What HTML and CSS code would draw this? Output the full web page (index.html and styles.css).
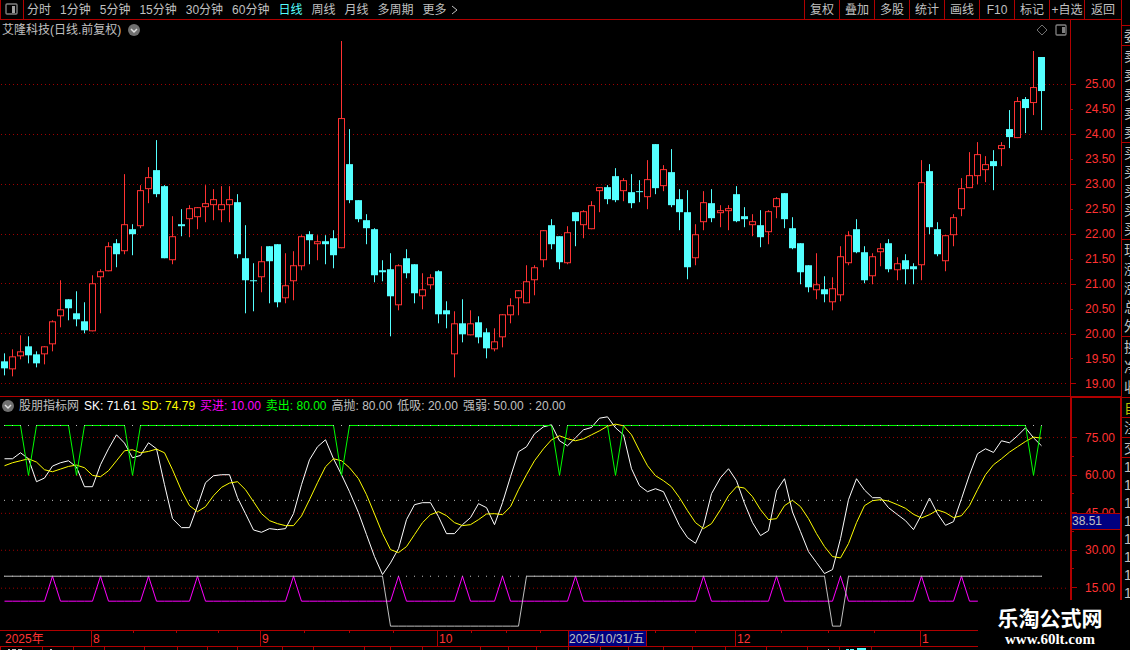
FILE: index.html
```html
<!DOCTYPE html>
<html lang="zh-CN">
<head>
    <meta charset="UTF-8">
    <meta name="viewport" content="width=device-width, initial-scale=1.0">
    <title>艾隆科技 日线</title>
    <link rel="stylesheet" href="styles.css">
</head>
<body>
    <div class="app">
        <main class="workspace">
            <header class="topbar">
                <button class="toggle" aria-label="侧栏">
                    <svg width="14" height="13" viewBox="0 0 14 13">
                        <rect x="1" y="1" width="11" height="10" rx="1" fill="none" stroke="#808080" stroke-width="1.4"/>
                        <rect x="7" y="3" width="3" height="7" fill="#a0a0a0"/>
                    </svg>
                </button>
                <nav class="periods">
                    <button>分时</button>
                    <button>1分钟</button>
                    <button>5分钟</button>
                    <button>15分钟</button>
                    <button>30分钟</button>
                    <button>60分钟</button>
                    <button class="active">日线</button>
                    <button>周线</button>
                    <button>月线</button>
                    <button>多周期</button>
                    <button class="more">更多
                        <svg width="7" height="10" viewBox="0 0 7 10"><path d="M1 1l5 4-5 4" fill="none" stroke="#c0c0c0"/></svg>
                    </button>
                </nav>
                <div class="tools">
                    <button>复权</button>
                    <button>叠加</button>
                    <button>多股</button>
                    <button>统计</button>
                    <button>画线</button>
                    <button>F10</button>
                    <button>标记</button>
                    <button>+自选</button>
                    <button>返回</button>
                </div>
            </header>

            <section class="pane price">
                <div class="plot">
                    <div class="caption title">
                        <span>艾隆科技(日线.前复权)</span>
                        <svg width="12" height="12" viewBox="0 0 12 12"><circle cx="6" cy="6" r="6" fill="#707070"/><path d="M3 5l3 3 3-3" fill="none" stroke="#e0e0e0" stroke-width="1.5"/></svg>
                        <span class="corner">
                            <svg width="12" height="12" viewBox="0 0 12 12"><path d="M6 1l5 5-5 5-5-5z" fill="none" stroke="#707070"/></svg>
                            <svg width="12" height="12" viewBox="0 0 12 12"><rect x="1" y="1" width="10" height="10" rx="1" fill="none" stroke="#808080" stroke-width="1.3"/><rect x="7" y="3" width="3" height="6" fill="#808080"/></svg>
                        </span>
                    </div>
                    <svg class="chart" id="priceChart" viewBox="0 38 1070 358" preserveAspectRatio="none"></svg>
                </div>
                <ul class="scale">
                    <li>25.00</li>
                    <li>24.50</li>
                    <li>24.00</li>
                    <li>23.50</li>
                    <li>23.00</li>
                    <li>22.50</li>
                    <li>22.00</li>
                    <li>21.50</li>
                    <li>21.00</li>
                    <li>20.50</li>
                    <li>20.00</li>
                    <li>19.50</li>
                    <li>19.00</li>
                </ul>
            </section>

            <section class="pane indicator">
                <div class="plot">
                    <div class="caption legend">
                        <svg width="12" height="12" viewBox="0 0 12 12"><circle cx="6" cy="6" r="6" fill="#707070"/><path d="M3 5l3 3 3-3" fill="none" stroke="#e0e0e0" stroke-width="1.5"/></svg>
                        <span>股朋指标网</span>
                        <span class="sk">SK: 71.61</span>
                        <span class="sd">SD: 74.79</span>
                        <span class="buy">买进: 10.00</span>
                        <span class="sell">卖出: 80.00</span>
                        <span>高抛: 80.00</span>
                        <span>低吸: 20.00</span>
                        <span>强弱: 50.00</span>
                        <span>: 20.00</span>
                    </div>
                    <svg class="chart" id="indicatorChart" viewBox="0 415 1070 215" preserveAspectRatio="none"></svg>
                </div>
                <ul class="scale">
                    <li>75.00</li>
                    <li></li>
                    <li>60.00</li>
                    <li></li>
                    <li>45.00</li>
                    <li></li>
                    <li>30.00</li>
                    <li></li>
                    <li>15.00</li>
                </ul>
                <span class="cursor-value">38.51</span>
            </section>

            <div class="timeline">
                <span>2025年</span>
                <span>8</span>
                <span>9</span>
                <span>10</span>
                <span class="cursor-date">2025/10/31/五</span>
                <span></span>
                <span>12</span>
                <span>1</span>
                <svg class="ticks" id="ticks" viewBox="0 0 1121 2" preserveAspectRatio="none"></svg>
            </div>
            <svg class="tabs" id="tabs" viewBox="0 0 1121 3" preserveAspectRatio="none"></svg>
        </main>

        <aside class="quote">
            <div class="block head"></div>
            <div class="block one"><span>委</span></div>
            <div class="block five"><span>卖</span><span>卖</span><span>卖</span><span>卖</span><span>卖</span></div>
            <div class="block five"><span>买</span><span>买</span><span>买</span><span>买</span><span>买</span></div>
            <div class="block five"><span>现</span><span>涨</span><span>涨</span><span>总</span><span>外</span></div>
            <div class="block three"><span>换</span><span>净</span><span>收</span></div>
            <div class="block one own"><span>自</span></div>
            <div class="block one"><span>注</span></div>
            <div class="block one"><span>交</span></div>
            <div class="deals"><span>1</span><span>1</span><span>1</span><span>1</span><span>1</span><span>1</span><span>1</span><span>1</span></div>
        </aside>

        <div class="brand">
            <strong>乐淘公式网</strong>
            <a href="#">www.60lt.com</a>
        </div>
    </div>
    <script src="script.js"></script>
</body>
</html>
```
FILE: styles.css
```css
* {
    box-sizing: border-box;
}

body {
    margin: 0;
    background: #000;
    color: #c0c0c0;
    font-family: "Liberation Sans", "Noto Sans CJK SC", sans-serif;
    font-size: 12px;
    line-height: 16px;
}

button {
    padding: 0;
    border: 0;
    background: none;
    color: inherit;
    font: inherit;
    white-space: nowrap;
    cursor: pointer;
}

ul {
    margin: 0;
    padding: 0;
    list-style: none;
}

svg {
    display: block;
    flex-shrink: 0;
}

.app {
    position: relative;
    display: flex;
    height: 100vh;
    overflow: hidden;
}

.workspace {
    display: flex;
    flex-direction: column;
    flex: 1;
    min-width: 0;
}

/* top bar */
.topbar {
    display: flex;
    height: 20px;
    border-bottom: 1px solid #b00000;
}

.toggle {
    display: flex;
    align-items: center;
    justify-content: center;
    width: 24px;
    border-left: 1px solid #b00000;
    border-right: 1px solid #b00000;
}

.periods {
    display: flex;
    gap: 9px;
    padding-left: 3px;
}

.periods .active {
    color: #54ffff;
}

.more {
    display: flex;
    align-items: center;
    gap: 4px;
}

.tools {
    display: flex;
    margin-left: auto;
}

.tools button {
    width: 35px;
    border-left: 1px solid #b00000;
}

.tools button:last-child {
    width: 37px;
}

/* chart panes */
.pane {
    position: relative;
    display: flex;
    min-height: 0;
}

.price {
    flex: 377 0 0;
    border-bottom: 1px solid #b00000;
}

.indicator {
    flex: 233 0 0;
}

.plot {
    display: flex;
    flex-direction: column;
    flex: 1;
    min-width: 0;
}

.caption {
    display: flex;
    align-items: center;
    gap: 5px;
    height: 18px;
    padding: 0 3px 0 2px;
    white-space: nowrap;
}

.title {
    gap: 7px;
    padding-top: 1px;
}

.legend {
    padding-bottom: 1px;
}

.corner {
    display: flex;
    gap: 7px;
    margin-left: auto;
}

.legend .sk {
    color: #fff;
}

.legend .sd {
    color: #ff0;
}

.legend .buy {
    color: #f0f;
}

.legend .sell {
    color: #0f0;
}

.chart {
    flex: 1;
    width: 100%;
    min-height: 0;
}

.scale {
    display: flex;
    flex-direction: column;
    width: 51px;
    padding-top: 52px;
    border-left: 1px solid #b00000;
    color: #ff3232;
}

.scale li {
    display: flex;
    align-items: center;
    flex: 1;
    min-height: 0;
}

.scale li::before {
    content: "";
    width: 5px;
    height: 1px;
    margin-right: 9px;
    background: #b00000;
}

.scale li:nth-child(even)::before {
    width: 2px;
    margin-right: 12px;
}

.indicator .scale {
    padding: 30px 0 33px;
    border: solid #b00000;
    border-width: 1px 1px 0 2px;
}

.indicator .scale li::before {
    margin-right: 8px;
}

.cursor-value {
    position: absolute;
    right: 1px;
    bottom: 100px;
    width: 48px;
    border: solid #b00000;
    border-width: 1px 0;
    background: #000080;
    line-height: 15px;
}

/* dates */
.timeline {
    position: relative;
    display: grid;
    grid-template-columns: 91fr 169fr 177fr 131fr 79fr 88fr 185fr 201fr;
    height: 17px;
    border-top: 1px solid #b00000;
    border-bottom: 1px solid #b00000;
    color: #ff3232;
    line-height: 16px;
}

.timeline span {
    height: 15px;
    padding-left: 1px;
    border-left: 1px solid #b00000;
    white-space: nowrap;
}

.timeline span:first-child {
    padding-left: 4px;
    border-color: transparent;
}

.timeline span:nth-child(6) {
    border-color: transparent;
}

.timeline .cursor-date {
    padding-left: 0;
    border-right: 1px solid #b00000;
    background: #000080;
    color: #c0c0c0;
}

.ticks {
    position: absolute;
    top: 0;
    left: 0;
    width: 100%;
    height: 2px;
}

.tabs {
    width: 100%;
    height: 3px;
}

/* quote column, only its edge is open */
.quote {
    width: 9px;
    border-left: 1px solid #b00000;
    overflow: hidden;
    font-size: 14px;
}

.quote span {
    display: flex;
    align-items: center;
    flex: 1;
    min-height: 0;
    padding-left: 2px;
}

.block {
    display: flex;
    flex-direction: column;
    border-bottom: 1px solid #b00000;
}

.head {
    height: 26px;
}

.one {
    height: 20px;
}

.five {
    height: 97px;
}

.three {
    height: 61px;
}

.own {
    color: #c0c000;
}

.deals span {
    height: 18px;
}

.brand {
    position: absolute;
    right: 0;
    bottom: 0;
    display: flex;
    flex-direction: column;
    align-items: center;
    width: 152px;
    height: 50px;
    padding: 8px 8px 0 0;
    background: #000;
    color: #fff;
}

.brand strong {
    font-size: 21px;
    line-height: 22px;
}

.brand a {
    color: #fff;
    font-family: "Liberation Serif", serif;
    font-size: 15px;
    font-weight: bold;
    line-height: 18px;
    text-decoration: none;
}
```
FILE: script.js
```js
const RED = '#ff3232';
const CYAN = '#54ffff';

// high, body top, body bottom, low, 1 = rising day
const candles = [
    [353,361,368,375,0],[349,356,369,376,1],[335,351,356,359,1],[336,346,355,363,0],[351,354,363,367,0],
    [346,346,354,364,1],[320,321,344,351,1],[280,309,316,327,1],[299,299,308,320,0],[291,313,319,326,0],
    [302,321,330,333,0],[275,283,331,331,1],[269,271,277,313,1],[242,246,271,271,1],[239,243,254,267,0],
    [174,224,251,254,1],[224,229,234,255,0],[185,190,226,228,1],[167,177,189,203,1],[140,170,194,197,0],
    [185,186,258,258,0],[216,236,260,264,1],[209,224,226,236,0],[205,208,219,237,1],[207,207,217,229,1],
    [185,203,207,222,1],[189,199,205,220,1],[186,204,210,222,1],[186,199,205,222,1],[194,202,254,258,0],
    [225,258,280,313,0],[263,280,281,311,0],[246,261,277,292,1],[246,246,261,303,0],[244,244,302,307,0],
    [253,285,298,303,1],[251,265,281,300,1],[235,236,266,270,1],[231,234,240,264,0],[235,241,244,260,1],
    [235,241,244,264,0],[230,238,255,268,0],[41,118,248,248,1],[129,164,200,203,0],[200,200,219,222,0],
    [214,220,228,244,0],[228,229,275,282,0],[260,270,272,281,0],[253,269,296,336,0],[264,265,305,310,1],
    [249,258,273,278,0],[264,264,293,303,0],[273,289,296,309,1],[274,277,285,289,1],[270,271,314,323,0],
    [301,310,314,328,0],[311,323,354,377,1],[299,323,334,342,0],[310,323,335,335,1],[316,322,337,343,0],
    [328,332,348,358,0],[328,341,349,351,1],[314,314,337,347,1],[298,305,315,323,1],[290,290,298,315,1],
    [265,281,303,303,1],[265,267,280,295,1],[230,230,260,267,1],[219,225,244,249,0],[236,236,262,269,0],
    [226,232,263,264,1],[212,212,221,246,0],[210,211,225,238,1],[201,205,229,229,1],[187,187,191,212,1],
    [185,187,199,204,0],[168,176,200,202,0],[178,180,191,201,1],[174,192,203,208,0],[180,191,192,202,0],
    [160,179,197,209,1],[144,144,188,194,0],[165,169,186,191,1],[149,172,205,207,0],[189,199,212,230,0],
    [190,212,267,279,0],[224,234,258,265,1],[191,202,222,230,1],[189,203,218,222,0],[205,210,213,227,1],
    [205,208,211,230,1],[186,194,221,222,0],[207,216,219,227,0],[214,221,225,236,1],[210,225,237,247,0],
    [210,211,232,244,1],[197,198,207,218,1],[193,193,219,228,0],[217,228,248,249,0],[243,243,272,284,0],
    [265,265,287,292,0],[253,284,290,299,1],[276,289,294,302,0],[277,288,302,310,1],[246,256,295,301,1],
    [231,235,263,265,1],[219,229,252,253,0],[246,252,280,283,0],[253,256,276,284,1],[243,248,252,266,1],
    [239,243,269,272,0],[257,263,270,280,1],[254,260,269,284,0],[263,266,269,284,0],[160,182,265,280,1],
    [164,171,227,234,0],[222,229,254,256,0],[235,235,261,271,1],[214,217,235,246,1],[178,188,209,216,1],
    [152,175,188,188,1],[142,154,176,184,1],[156,164,170,182,1],[150,161,166,190,0],[142,145,149,166,1],
    [110,129,137,148,0],[97,101,138,138,1],[97,99,108,133,0],[51,87,103,115,1],[57,57,91,130,0]
];

// SK and SD, in thirds of a unit below y = 395
const sk = [
    190,190,172,190,259,248,212,202,196,215,274,274,208,160,118,143,187,180,142,160,268,370,397,397,332,262,
    241,238,238,307,355,404,411,400,403,400,355,268,193,154,133,190,238,289,352,418,484,538,503,460,373,328,
    322,322,364,415,415,388,367,325,337,388,322,244,169,154,115,94,88,136,151,127,103,96,68,64,97,118,220,271,
    289,280,289,340,391,427,444,391,295,247,220,256,324,382,421,406,286,250,350,409,469,502,535,523,430,313,
    250,284,307,307,337,358,376,403,358,308,355,390,379,310,238,175,160,171,136,142,121,97,127,151
];
const sd = [
    211,202,196,190,200,223,229,221,213,209,217,240,244,226,196,166,163,172,168,161,172,223,286,331,349,334,
    301,276,263,259,283,319,355,376,385,391,391,362,313,262,214,190,196,217,250,298,356,415,463,472,454,418,
    382,358,349,361,382,391,388,373,356,355,358,334,283,238,196,160,133,121,130,136,130,118,106,92,86,91,118,
    166,211,241,256,274,307,346,382,400,385,343,301,274,278,304,343,373,370,331,315,334,370,415,454,484,488,
    445,382,331,316,313,317,328,339,357,368,358,344,352,367,361,331,283,238,208,190,170,154,138,125,128
];

const sellDays = [3, 9, 16, 42, 69, 76, 128];
const buyDays = [6, 12, 18, 24, 36, 49, 57, 62, 71, 87, 96, 104, 114, 119];

function xOf(i) {
    return 4 + 8 * i + Math.floor((i + 0.5) / 22.25);
}

function rect(x, y, w, h, fill) {
    return `<rect x="${x}" y="${y}" width="${w}" height="${h}" fill="${fill}"/>`;
}

function dots(y) {
    return `<line x1="1" y1="${y + 0.5}" x2="1067" y2="${y + 0.5}" stroke="#a00000" stroke-dasharray="1 3" shape-rendering="crispEdges"/>`;
}

function line(values, color) {
    const points = values.map((y, i) => `${xOf(i) + 0.5},${y + 0.5}`).join(' ');
    return `<polyline points="${points}" fill="none" stroke="${color}" shape-rendering="crispEdges"/>`;
}

function drawPrice() {
    let out = [84, 134, 184, 234, 283, 333, 383].map(dots).join('');
    candles.forEach(([high, top, bottom, low, up], i) => {
        const x = xOf(i);
        out += rect(x, high, 1, low - high, up ? RED : CYAN);
        out += rect(x - 3, top, 7, bottom - top, up ? RED : CYAN);
        if (up) {
            out += rect(x - 2, top + 1, 5, bottom - top - 2, '#000');
        }
    });
    document.getElementById('priceChart').innerHTML = out;
}

function drawIndicator() {
    let out = [437, 475, 513, 550, 588].map(dots).join('');
    out += line(candles.map((c, i) => buyDays.includes(i) ? 576 : 601), '#ff00ff');
    out += line(candles.map((c, i) => (i > 47 && i < 65) || i === 103 || i === 104 ? 626 : 576), '#c0c0c0');
    out += line(sk.map(v => 395 + v / 3), '#ffffff');
    out += line(sd.map(v => 395 + v / 3), '#ffff00');
    out += line(candles.map((c, i) => sellDays.includes(i) ? 475 : 425), '#00ff00');
    candles.forEach((c, i) => {
        [425, 500, 576].forEach(y => out += rect(xOf(i), y, 1, 1, '#c0c0c0'));
    });
    document.getElementById('indicatorChart').innerHTML = out;
}

function drawMarks(id, list, h) {
    document.getElementById(id).innerHTML = list.map(x => rect(x, 0, 1, h, '#b00000')).join('');
}

drawPrice();
drawIndicator();
drawMarks('ticks', [133, 176, 218, 304, 349, 393, 471, 506, 540, 655, 695, 781, 828, 874], 2);
drawMarks('tabs', [0, 42, 73, 104, 144, 177, 207, 237, 282, 313, 364, 390, 422, 480, 508, 536, 568, 600, 628, 663, 692, 725, 766, 807, 839, 871], 3);
document.getElementById('tabs').innerHTML += rect(8, 2, 2, 1, '#c0c0c0') + rect(12, 2, 4, 1, '#c0c0c0')
    + rect(18, 2, 4, 1, '#c0c0c0') + rect(50, 2, 2, 1, '#c0c0c0') + rect(828, 2, 1, 1, '#c0c0c0')
    + rect(846, 2, 3, 1, CYAN) + rect(850, 2, 4, 1, CYAN) + rect(857, 1, 9, 2, CYAN);
```
